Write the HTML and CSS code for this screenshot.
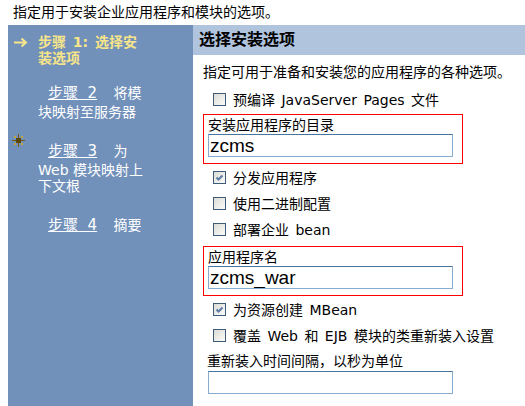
FILE: index.html
```html
<!DOCTYPE html>
<html lang="zh-CN">
<head>
<meta charset="utf-8">
<title>选择安装选项</title>
<link rel="stylesheet" href="styles.css">
</head>
<body>
<p class="intro">指定用于安装企业应用程序和模块的选项。</p>
<div class="wizard">
  <nav class="steps">
    <div class="step current">
      <span class="marker"><svg class="arrow" width="15" height="11" viewBox="0 0 15 11"><path d="M1 5.5H13M8.5 1.5L13 5.5L8.5 9.5" fill="none" stroke="#f7e58a" stroke-width="2"/></svg></span>
      <div class="step-text">步骤 1: 选择安装选项</div>
    </div>
    <div class="step">
      <span class="marker"></span>
      <div class="step-text link-step"><a href="#">步骤&nbsp;&nbsp;2</a> 将模块映射至服务器</div>
    </div>
    <div class="step">
      <span class="marker"><svg class="sun" width="13" height="13" viewBox="0 0 13 13"><path d="M6.5 0V13M0 6.5H13" stroke="#6e5c12" stroke-width="1"/><rect x="4" y="4" width="5" height="5" fill="#5a4700"/><rect x="2" y="2" width="2" height="2" fill="#c2a53a"/><rect x="9" y="2" width="2" height="2" fill="#c2a53a"/><rect x="2" y="9" width="2" height="2" fill="#c2a53a"/><rect x="9" y="9" width="2" height="2" fill="#c2a53a"/></svg></span>
      <div class="step-text link-step"><a href="#">步骤&nbsp;&nbsp;3</a> 为 Web 模块映射上下文根</div>
    </div>
    <div class="step">
      <span class="marker"></span>
      <div class="step-text link-step"><a href="#">步骤&nbsp;&nbsp;4</a> 摘要</div>
    </div>
  </nav>
  <main class="panel">
    <h2 class="panel-title">选择安装选项</h2>
    <div class="panel-body">
      <p class="desc">指定可用于准备和安装您的应用程序的各种选项。</p>
      <div class="check"><span class="box"></span><span>预编译 JavaServer Pages 文件</span></div>
      <div class="field first">
        <label>安装应用程序的目录</label>
        <input class="text-input" type="text" value="zcms">
      </div>
      <div class="check"><span class="box"><svg width="11" height="11" viewBox="0 0 11 11"><path d="M2.5 5.5L4.5 7.5L8.5 3.5" fill="none" stroke="#5b7ba3" stroke-width="2"/></svg></span><span>分发应用程序</span></div>
      <div class="check"><span class="box"></span><span>使用二进制配置</span></div>
      <div class="check"><span class="box"></span><span>部署企业 bean</span></div>
      <div class="field second">
        <label>应用程序名</label>
        <input class="text-input" type="text" value="zcms_war">
      </div>
      <div class="check"><span class="box"><svg width="11" height="11" viewBox="0 0 11 11"><path d="M2.5 5.5L4.5 7.5L8.5 3.5" fill="none" stroke="#5b7ba3" stroke-width="2"/></svg></span><span>为资源创建 MBean</span></div>
      <div class="check"><span class="box"></span><span>覆盖 Web 和 EJB 模块的类重新装入设置</span></div>
      <div class="plain-field">
        <label>重新装入时间间隔，以秒为单位</label>
        <input class="text-input" type="text" value="">
      </div>
    </div>
  </main>
</div>
</body>
</html>
```

FILE: styles.css
```css
html, body {
  margin: 0;
  padding: 0;
}

body {
  margin-left: 8px;
  font-family: "DejaVu Sans", "Noto Sans CJK SC", sans-serif;
  font-size: 14px;
  color: #000;
  background: #fff;
  overflow: hidden;
}

.intro {
  margin: 0;
  padding-left: 5px;
  height: 25px;
  line-height: 25px;
}

.wizard {
  display: flex;
  height: 381px;
}

/* left navigation */
.steps {
  width: 185px;
  flex: none;
  background: #7190ba;
  padding-top: 9px;
  box-sizing: border-box;
}

.step {
  display: flex;
}

.step + .step {
  margin-top: 21px;
}

.step.current + .step {
  margin-top: 17px;
}

.marker {
  width: 30px;
  flex: none;
  padding-left: 4px;
  box-sizing: border-box;
}

.arrow {
  display: block;
  margin: 3px 0 0 1px;
}

.sun {
  display: block;
  margin-top: -7px;
}

.step-text {
  width: 108px;
  line-height: 16px;
  color: #fff;
}

.current .step-text {
  color: #f7e58a;
  font-weight: bold;
  word-spacing: 2px;
}

.link-step {
  text-indent: 10px;
}

.link-step a {
  display: inline-block;
  text-indent: 0;
  color: #fff;
  text-decoration: underline;
  font-size: 15px;
  line-height: 21px;
  margin-right: 12px;
}

/* right panel */
.panel {
  flex: 1;
  min-width: 0;
}

.panel-title {
  margin: 0;
  height: 30px;
  line-height: 30px;
  padding-left: 6px;
  background: #b0c4de;
  font-size: 16px;
  font-weight: bold;
}

.panel-body {
  padding: 7px 0 0 10px;
}

.desc {
  margin: 0 0 4px;
  line-height: 20px;
}

.check {
  display: flex;
  align-items: center;
  height: 26px;
  padding-left: 10px;
  gap: 7px;
  word-spacing: 2px;
}

.box {
  width: 13px;
  height: 13px;
  flex: none;
  box-sizing: border-box;
  border: 1px solid #3f5b7a;
  background: linear-gradient(135deg, #dcdcd6, #fbfbf9);
  display: flex;
  align-items: center;
  justify-content: center;
}

.box svg {
  display: block;
}

.field {
  width: 260px;
  box-sizing: border-box;
  border: 1px solid #f00;
  padding: 1px 0 6px 4px;
}

.field.first {
  margin-top: 2px;
}

.field.second {
  margin-top: 4px;
}

.field label,
.plain-field label {
  display: block;
  line-height: 18px;
}

.text-input {
  display: block;
  width: 245px;
  height: 23px;
  box-sizing: border-box;
  margin: 0;
  padding: 0 1px;
  border: 1px solid;
  border-color: #4a74a0 #88acd0 #88acd0 #88acd0;
  background: #fff;
  font-family: "Liberation Sans", sans-serif;
  font-size: 19px;
  color: #000;
  outline: none;
}

.plain-field {
  margin-top: 4px;
}

.plain-field label {
  padding-left: 4px;
}

.plain-field .text-input {
  margin: 1px 0 0 5px;
}
```
